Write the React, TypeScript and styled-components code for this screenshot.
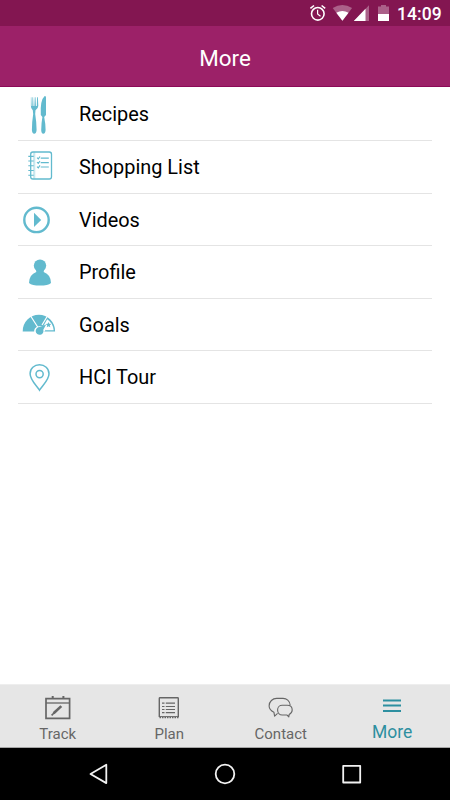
import React from 'react';
import styled, { createGlobalStyle } from 'styled-components';

const Global = createGlobalStyle`
  * { box-sizing: border-box; }
  body { margin: 0; background: #fff; font-family: Roboto, "Liberation Sans", sans-serif; }
`;

const Screen = styled.div`
  display: flex;
  flex-direction: column;
  width: 450px;
  height: 800px;
  overflow: hidden;
  background: #fff;
`;

const StatusBar = styled.div`
  display: flex;
  justify-content: flex-end;
  height: 26px;
  background: #831651;
  color: #fff;
`;

const StatusIcons = styled.svg`
  width: 90px;
  height: 26px;
`;

const Clock = styled.span`
  width: 53px;
  font-size: 17.5px;
  font-weight: 500;
  line-height: 28px;
  letter-spacing: 0.1px;
  white-space: nowrap;
`;

const Header = styled.header`
  display: flex;
  align-items: center;
  justify-content: center;
  height: 61px;
  padding: 3px 0 0 0;
  background: #9c2168;
  border-bottom: 1px solid #8c0a58;
  color: #fff;
  font-size: 22.4px;
`;

const List = styled.ul`
  flex: 1;
  margin: 0;
  padding: 1.4px 18px 0;
  list-style: none;
`;

const Row = styled.li`
  display: flex;
  height: 52.6px;
  border-bottom: 1px solid #e4e4e4;
`;

const RowIcon = styled.svg`
  flex: none;
  width: 44px;
  height: 52px;
  color: #62bace;
`;

const RowLabel = styled.span`
  padding-left: 17px;
  font-size: 19.9px;
  line-height: 53.4px;
  color: #000;
`;

const TabBar = styled.nav`
  display: flex;
  height: 64px;
  padding: 0 2px;
  background: #e6e6e6;
  border-top: 1px solid #eee;
  border-bottom: 1px solid #a5a5a5;
`;

const Tab = styled.div<{ $active?: boolean }>`
  display: flex;
  flex: 1;
  flex-direction: column;
  align-items: center;
  padding-top: 8px;
  color: ${p => (p.$active ? '#2d8fa0' : '#666')};
`;

const TabIcon = styled.svg`
  width: 32px;
  height: 30px;
`;

const TabLabel = styled.span<{ $active?: boolean }>`
  margin-top: ${p => (p.$active ? '-1px' : '1px')};
  font-size: ${p => (p.$active ? '17.5px' : '15px')};
  line-height: 20px;
`;

const SystemNav = styled.div`
  display: flex;
  align-items: center;
  justify-content: center;
  gap: 95px;
  height: 52px;
  background: #000;
`;

const SystemIcon = styled.svg`
  width: 32px;
  height: 32px;
  fill: none;
  stroke: #f2f2f2;
  stroke-width: 1.8;
  stroke-linejoin: round;
`;

const rows = [
  {
    label: 'Recipes',
    icon: (
      <g fill="currentColor">
        <path d="M12.9 9.3V18Q12.8 20.8 14.8 22.3L15.2 26Q13.9 34 13.9 42Q14.1 45.5 16.2 45.7Q18.4 45.5 18.6 42Q18.5 34 17.2 26L17.5 22.3Q20 20.8 20.3 18L19.9 9.3H19.1L18.8 18H17.9L17.5 9.3H16.8L16.4 18H15.5L15.1 9.3H14.5L14.3 18H13.6L13.3 9.3Z" />
        <path d="M26.7 8Q28 8 28 9.4V27L26.2 29Q27.6 36 27.6 42Q27.4 45.5 25.3 45.7Q23.3 45.5 23.2 42Q23.3 35 24.4 29L22.8 27Q22 12 26.7 8Z" />
      </g>
    ),
  },
  {
    label: 'Shopping List',
    icon: (
      <g fill="none" stroke="currentColor" strokeWidth="1.1">
        <path d="M16.2 11V37.8" strokeWidth="2.2" opacity=".35" />
        <rect x="12.7" y="11" width="20.8" height="27" rx="2.2" strokeWidth="1.3" />
        <path d="M10.3 15.4H15.7M10.3 20H15.7M10.3 24.8H15.7M10.3 29.5H15.7M10.3 34.3H15.7" />
        <path d="M22.7 17.1H30.8M22.7 21.6H30.8M22.7 26H30.8" />
        <path d="M19 16.7L20.3 17.9L22 15.5M19 21.2L20.3 22.4L22 20M19 25.6L20.3 26.8L22 24.4" />
      </g>
    ),
  },
  {
    label: 'Videos',
    icon: (
      <>
        <circle cx="18.5" cy="25.9" r="12.2" fill="none" stroke="currentColor" strokeWidth="2.4" />
        <path d="M16 18.8L23.2 26L16 33Z" fill="currentColor" />
      </>
    ),
  },
  {
    label: 'Profile',
    icon: (
      <g fill="currentColor">
        <circle cx="22" cy="19.6" r="6.2" />
        <path d="M18 23.7H26L25.7 26Q32.8 28.5 33 37Q30 39.6 22 39.6Q14 39.6 11 37Q11.2 28.5 18.3 26Z" />
      </g>
    ),
  },
  {
    label: 'Goals',
    icon: (
      <>
        <path d="M4.7 32.4A16.2 16.7 0 0 1 37.1 32.4Z" fill="currentColor" />
        <path d="M12.8 17.3L20 28.5M29 17.8L24 26" stroke="#fff" strokeWidth="1.2" />
        <path d="M29.2 20.2Q35 24 35.7 31.3H27.5L25.5 27Z" fill="#fff" />
        <path d="M30.5 22.9L31.3 24.8L33.3 25L31.8 26.3L32.3 28.3L30.5 27.2L28.7 28.3L29.2 26.3L27.7 25L29.7 24.8Z" fill="currentColor" />
        <path d="M16.2 33.4Q15.5 28 21 27.3H27.5V31L25.5 34H17Z" fill="#fff" />
        <path d="M28.2 25.4L25.3 30.7A3.9 3.9 0 1 1 21.8 28Z" fill="currentColor" />
      </>
    ),
  },
  {
    label: 'HCI Tour',
    icon: (
      <g fill="none" stroke="currentColor" strokeWidth="1.5">
        <path d="M21.5 39.2C18.8 34.6 12.1 29 12.1 22.7C12.1 17.4 16.3 13.8 21.5 13.8S31 17.4 31 22.7C31 29 24.2 34.6 21.5 39.2Z" />
        <circle cx="21.6" cy="23.1" r="3.6" />
      </g>
    ),
  },
];

const tabs = [
  {
    label: 'Track',
    icon: (
      <g fill="none" stroke="currentColor">
        <path d="M4 5.6H27.6V25.4H4Z" strokeWidth="1.7" />
        <path d="M4 10H27.6" strokeWidth="1.3" />
        <path d="M10.7 3V6M21.4 3V6" strokeWidth="2" />
        <path d="M11.6 20.2L19.3 13.1" strokeWidth="2.6" />
        <path d="M9.6 22.4L12 20" strokeWidth="1.6" />
      </g>
    ),
  },
  {
    label: 'Plan',
    icon: (
      <g fill="none" stroke="currentColor">
        <path d="M6.3 24V5.4Q6.3 4.8 7 4.8H24.6Q25.3 4.8 25.3 5.4V24" strokeWidth="1.4" />
        <path d="M6 23.6H25.6" />
        <path d="M6.5 24.6H25.5" strokeDasharray="1.5 1" strokeWidth="1.2" />
        <path d="M9 10.2H11.5M9 13.5H11.5M9 16.5H11.5M9 19.7H11.5M12.8 10.2H22M12.8 13.5H22M12.8 16.5H22M12.8 19.7H22" strokeWidth="1.2" />
      </g>
    ),
  },
  {
    label: 'Contact',
    icon: (
      <g fill="none" stroke="currentColor" strokeWidth="1.1" strokeLinejoin="round">
        <path d="M12.6 20.4L9.6 23.2L8.9 19.2Q4.2 17 4.1 13C4 8.4 7.8 5.4 11.6 5.4H18C21.6 5.4 24.8 8 25.2 12.4" />
        <path d="M22 22L23.8 23.8L24.2 21.4Q27.2 19.8 27.2 17C27.2 14 25 12.3 22.2 12.3H17.2C14.6 12.3 12.6 14.2 12.6 17S14.6 22 17.2 22H22" />
      </g>
    ),
  },
  {
    label: 'More',
    active: true,
    icon: <path d="M7 7.4H25M7 12.5H25M7 17.9H25" stroke="currentColor" strokeWidth="2" />,
  },
];

export default function App() {
  return (
    <>
      <Global />
      <Screen>
        <StatusBar>
          <StatusIcons viewBox="307 0 90 26" fill="#fff">
            <g fill="none" stroke="#fff" strokeWidth="1.6">
              <circle cx="317.8" cy="13.8" r="6.3" />
              <path d="M317.6 9.8V14L320.5 16.2" strokeWidth="1.2" />
              <path d="M310.4 8.4L314 5.5M325.2 8.4L321.6 5.5" />
            </g>
            <path d="M332.7 8Q342.4 1.8 352.1 8L342.4 20.8Z" opacity=".32" />
            <path d="M336.3 12.7Q342.4 9.1 348.5 12.7L342.4 20.8Z" />
            <path d="M369 5.2V21H353.8Z" opacity=".32" />
            <path d="M365.5 8.8V21H353.8Z" />
            <path d="M381 5H386V6.6H389V14H378V6.6H381Z" opacity=".32" />
            <path d="M378 14H389V21H378Z" />
          </StatusIcons>
          <Clock>14:09</Clock>
        </StatusBar>
        <Header>More</Header>
        <List>
          {rows.map(row => (
            <Row key={row.label}>
              <RowIcon viewBox="0 0 44 52">{row.icon}</RowIcon>
              <RowLabel>{row.label}</RowLabel>
            </Row>
          ))}
        </List>
        <TabBar>
          {tabs.map(tab => (
            <Tab key={tab.label} $active={tab.active}>
              <TabIcon viewBox="0 0 32 30">{tab.icon}</TabIcon>
              <TabLabel $active={tab.active}>{tab.label}</TabLabel>
            </Tab>
          ))}
        </TabBar>
        <SystemNav>
          <SystemIcon viewBox="0 0 32 32">
            <path d="M24.3 6.8V25.1L8.5 16Z" />
          </SystemIcon>
          <SystemIcon viewBox="0 0 32 32">
            <circle cx="16" cy="16" r="9.3" />
          </SystemIcon>
          <SystemIcon viewBox="0 0 32 32">
            <rect x="7.2" y="7.8" width="17" height="16.7" />
          </SystemIcon>
        </SystemNav>
      </Screen>
    </>
  );
}
